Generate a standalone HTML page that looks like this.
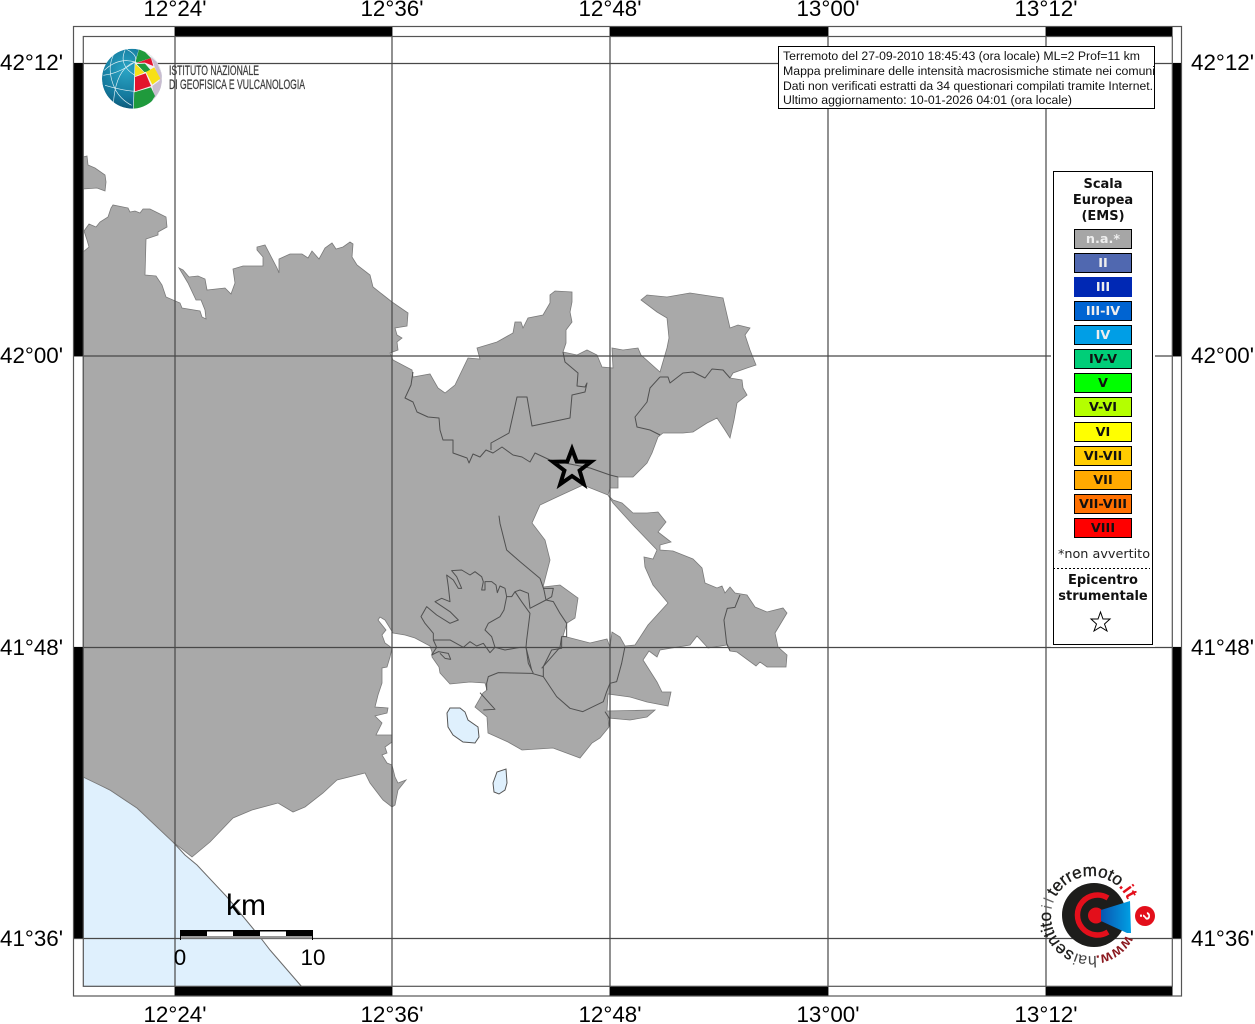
<!DOCTYPE html>
<html><head><meta charset="utf-8"><style>
html,body{margin:0;padding:0;background:#fff;width:1255px;height:1024px;overflow:hidden}
svg{display:block}
.ax{font:22.4px "Liberation Sans",sans-serif;fill:#000}
.lg{font:bold 13px "DejaVu Sans",sans-serif;text-anchor:middle;fill:#111}
.c{font:bold 12.8px "DejaVu Sans",sans-serif;text-anchor:middle;fill:#111}
.t{font:12.3px "Liberation Sans",sans-serif;fill:#111}
.il{fill:none;stroke:#505050;stroke-linejoin:round}
</style></head><body>
<svg width="1255" height="1024" viewBox="0 0 1255 1024" xmlns="http://www.w3.org/2000/svg">
<defs>
<clipPath id="gc"><circle cx="132" cy="78.700" r="30"/></clipPath>
<radialGradient id="gb" cx=".4" cy=".35" r=".75"><stop offset="0" stop-color="#2aa5c5"/><stop offset=".6" stop-color="#14789c"/><stop offset="1" stop-color="#0b4a68"/></radialGradient>
<linearGradient id="mg" x1="0" y1="0" x2="1" y2="0"><stop offset="0" stop-color="#0a55b0"/><stop offset="1" stop-color="#00a0e4"/></linearGradient>
<path id="a1" d="M1055.700 897.200 A40 40 0 0 1 1125.600 896"/>
<path id="a2" d="M1118.300 886.800 A40 40 0 0 1 1131 916"/>
<path id="a3" d="M1074.700 952.600 A40 40 0 0 1 1055 898.500"/>
<path id="a4" d="M1051.500 909.800 A40 40 0 0 1 1058.200 893"/>
<path id="a5" d="M1096.600 955.600 A40 40 0 0 1 1068 948.800"/>
<path id="a6" d="M1126.300 934.800 A40 40 0 0 1 1096.600 955.600"/>
</defs>
<rect width="1255" height="1024" fill="#fff"/>

<polygon fill="#dff0fd" points="83,776 110,790 137,808 173,842 185,855 197,865 227,897 260,937 270,950 302,987 83,987"/>
<polyline fill="none" stroke="#6a6a6a" stroke-width="1" points="83,776 110,790 137,808 173,842 185,855 197,865 227,897 260,937 270,950 302,987"/>

<path fill="#a9a9a9" stroke="#7a7a7a" stroke-width=".8" d="M83,157 87,156 88,165 95,168 105,175 106,182 105,191 97,188 83,189Z"/>
<path fill="#a9a9a9" stroke="#7a7a7a" stroke-width=".8" d="M225,497 232,491 238,494 239,500 230,502Z"/>
<path fill="#a9a9a9" fill-rule="evenodd" stroke="#7a7a7a" stroke-width=".8" d="M83,252 89,247 87,240 84,231 89,224 96,227 100,222 108,217 111,208 113,205 128,208 130,212 135,211 140,213 143,209 150,209 158,213 166,217 167,227 158,232 158,235 146,239 145,275 156,276 162,285 166,297 180,303 182,308 200,311 202,317 206,319 205,310 201,300 196,300 188,283 179,268 183,270 189,277 198,276 205,279 207,290 225,288 231,294 235,283 233,269 243,266 263,266 263,257 257,250 257,247 265,245 277,268 279,273 279,259 290,254 302,254 308,258 312,251 319,259 325,248 332,243 336,249 343,247 350,242 353,244 352,257 357,265 370,275 373,287 392,302 408,313 407,326 395,328 397,335 402,338 397,342 398,350 390,353 393,360 412,370 413,377 430,374 438,388 445,393 455,385 468,358 480,359 477,348 497,342 513,333 515,322 521,322 523,328 528,318 543,315 550,303 550,295 555,291 572,292 572,302 570,312 572,322 566,330 566,343 563,352 577,355 587,350 597,355 602,367 613,368 612,348 623,350 638,348 641,355 660,372 667,348 669,338 667,318 657,312 641,300 647,295 667,297 690,293 723,298 730,328 738,325 750,328 745,335 750,350 756,365 747,368 733,373 730,378 742,380 743,388 747,395 737,403 734,420 730,438 725,430 717,418 707,423 693,432 683,433 663,433 658,437 652,453 647,463 633,477 618,477 618,488 610,488 608,495 613,500 622,503 633,513 647,513 658,512 666,522 658,532 671,542 660,545 660,550 673,551 693,559 702,568 705,583 717,588 722,586 725,593 730,587 735,593 747,595 755,607 767,612 783,608 787,613 775,633 778,647 787,655 786,667 767,667 760,662 756,666 737,652 730,651 727,645 708,648 697,636 690,645 660,650 657,657 649,651 643,660 657,682 662,692 671,692 668,706 647,702 630,697 608,694 607,711 655,710 647,717 630,720 608,718 609,727 600,738 592,743 580,758 553,748 522,750 508,742 488,733 487,717 475,707 483,693 487,690 485,683 470,682 450,684 440,673 439,667 432,657 432,652 430,646 415,638 405,635 393,633 385,620 380,617 378,620 386,630 382,635 385,643 392,648 390,657 387,667 382,668 382,683 378,695 375,707 388,708 387,713 375,716 382,723 376,735 392,735 392,742 385,747 387,753 382,755 387,763 392,765 395,777 398,783 406,780 398,790 395,805 392,807 383,800 370,783 365,773 337,780 323,793 305,807 293,812 278,803 252,810 233,818 210,842 192,857 173,842 137,808 110,790 83,777Z M608,495 583,485 557,497 540,505 532,523 545,540 550,560 543,587 560,585 578,598 575,618 567,623 563,636 590,643 607,639 610,647 612,632 620,637 625,646 635,645 648,625 668,603 653,585 645,567 644,557 653,559 657,550 633,525 613,503Z"/>

<g class="il" stroke-width="1">
<polyline points="413,372 411,385 405,398 413,402 417,412 428,417 439,418 440,430 443,440 453,440 453,453 467,458 469,463 473,454 480,457 486,450 493,453 502,447 513,455 522,457 530,462 535,453 550,460 590,468 610,475 618,477"/>
<polyline points="491,450 491,443 509,433 517,397 527,397 532,426 570,418 572,395 585,392 587,383 585,387 577,386 578,373 565,362 563,352"/>
<polyline points="660,377 650,388 647,402 635,417 637,427 650,430 660,435"/>
<polyline points="660,377 668,377 670,383 683,373 693,372 705,378 712,369 723,370 730,378"/>
</g>
<g class="il" stroke-width="3" transform="translate(420 560) scale(.3333)">
<polyline points="378,120 330,145 325,100 300,90 285,95 275,110 260,110 255,85 240,78 232,98 228,75 215,65 195,65 195,90 185,90 190,65 185,50 165,35 150,45 125,30 95,32 110,50 125,85 115,85 100,60 80,45 85,80 90,125 65,115 45,125 90,155 115,180 90,190 50,165 20,140 3,170 15,190 40,220 40,240 90,240 130,262 150,245 170,258 190,250 210,278 225,262 255,270 300,262 318,262 325,290 335,330"/>
<polyline points="260,110 252,150 240,170 205,190 195,210 215,230 225,262"/>
<polyline points="285,95 305,125 330,160 320,240 318,262"/>
<polyline points="40,240 50,262 35,285 55,275 85,280 92,298 75,295 60,280"/>
<polyline points="370,85 400,85 395,110 378,120 400,125 420,160 440,190 440,230 425,230 420,262 365,325"/>
</g>
<g class="il" stroke-width="3" transform="translate(400 500) scale(.3333)">
<polyline points="297,47 300,70 320,150 360,185 420,235 432,270 438,300"/>
<polyline points="260,570 260,550 265,530 295,518 395,520 430,530 470,590 510,625 548,635 610,605 620,575 630,550 650,545 665,490 675,440"/>
<polyline points="378,440 385,490 400,520"/>
<polyline points="430,530 430,500 455,450 485,445 485,410"/>
<polyline points="240,578 285,628 250,630"/>
<polyline points="1020,285 1005,322 982,325 972,360 980,430 990,452"/>
<polyline points="615,635 628,655 628,680"/>
</g>

<path fill="#dff0fd" stroke="#555" stroke-width="1" d="M447,713 450,708 460,708 465,712 468,720 478,727 479,737 475,743 463,742 453,735 448,727Z"/>
<path fill="#dff0fd" stroke="#555" stroke-width="1" d="M493,783 497,772 506,769 507,783 505,790 499,794 494,792Z"/>

<path fill="none" stroke="#484848" stroke-width="1.200" d="M175 26V996M392 26V996M610 26V996M828 26V996M1046 26V996M73 63.500H1181M73 356H1181M73 647.500H1181M73 938.500H1181"/>

<g fill="#000">
<rect x="175" y="26" width="217" height="10.500"/><rect x="610" y="26" width="218" height="10.500"/><rect x="1046" y="26" width="126.500" height="10.500"/>
<rect x="175" y="986" width="217" height="10"/><rect x="610" y="986" width="218" height="10"/><rect x="1046" y="986" width="126.500" height="10"/>
<rect x="73" y="63" width="10.500" height="293"/><rect x="73" y="647" width="10.500" height="291"/>
<rect x="1172" y="63" width="9" height="293"/><rect x="1172" y="647" width="9" height="291"/>
</g>
<rect x="73.500" y="26.500" width="1108" height="969.500" fill="none" stroke="#555" stroke-width="1.200"/>
<rect x="83.300" y="36.500" width="1089" height="949.800" fill="none" stroke="#555" stroke-width="1.200"/>

<polygon fill="none" stroke="#000" stroke-width="4" stroke-miterlimit="10" points="572,449 576.700,461.500 591,461.800 579.600,470.500 583.800,484.200 572,476 560.200,484.200 564.400,470.500 553,461.800 567.300,461.500"/>

<g class="ax" text-anchor="middle">
<text x="175" y="16">12°24'</text><text x="392" y="16">12°36'</text><text x="610" y="16">12°48'</text><text x="828" y="16">13°00'</text><text x="1046" y="16">13°12'</text>
<text x="175" y="1022">12°24'</text><text x="392" y="1022">12°36'</text><text x="610" y="1022">12°48'</text><text x="828" y="1022">13°00'</text><text x="1046" y="1022">13°12'</text>
</g>
<g class="ax">
<text x="0" y="70">42°12'</text><text x="0" y="363">42°00'</text><text x="0" y="655">41°48'</text><text x="0" y="946">41°36'</text>
<text x="1191" y="70">42°12'</text><text x="1191" y="363">42°00'</text><text x="1191" y="655">41°48'</text><text x="1191" y="946">41°36'</text>
</g>

<!-- INGV logo -->
<g clip-path="url(#gc)">
<circle cx="132" cy="78.700" r="30" fill="url(#gb)"/>
<g transform="translate(95 42) scale(.3333)">
<polygon fill="#f2f0f3" points="120,60 135,10 215,60 215,210 115,210"/>
<polygon fill="#1f9a3c" points="122,58 132,22 150,30 168,48 125,62"/>
<polygon fill="#e3132c" points="125,63 168,48 175,72 150,62"/>
<polygon fill="#c9bdd0" points="168,45 185,60 200,95 200,130 192,110 178,72"/>
<polygon fill="#1f9a3c" points="125,66 150,65 170,88 148,90"/>
<polygon fill="#f7e017" points="120,65 148,92 120,103"/>
<polygon fill="#e3132c" points="120,105 152,94 168,132 120,148"/>
<polygon fill="#f7e017" points="153,90 178,76 196,110 172,128"/>
<polygon fill="#c9bdd0" points="172,132 198,113 198,140 178,170"/>
<polygon fill="#1f9a3c" points="117,151 168,136 180,162 160,195 115,205"/>
<g fill="none" stroke="#dff0f5" stroke-width="2">
<path d="M120,60 L115,200"/>
<path d="M120,60 Q60,80 55,190"/>
<path d="M120,60 Q70,45 28,85"/>
<path d="M95,22 Q130,40 120,60"/>
<path d="M60,30 Q30,80 62,145 Q80,175 110,190"/>
<path d="M90,25 Q70,70 120,100"/>
<path d="M25,100 Q70,95 120,60"/>
<path d="M30,130 Q80,145 118,148"/>
</g>
</g>
</g>
<text x="169" y="75" font-family="Liberation Sans,sans-serif" font-size="13.500" fill="#3c3c3c" stroke="#3c3c3c" stroke-width=".25" textLength="90" lengthAdjust="spacingAndGlyphs">ISTITUTO NAZIONALE</text>
<text x="169" y="89" font-family="Liberation Sans,sans-serif" font-size="13.500" fill="#3c3c3c" stroke="#3c3c3c" stroke-width=".25" textLength="136" lengthAdjust="spacingAndGlyphs">DI GEOFISICA E VULCANOLOGIA</text>

<!-- Info box -->
<rect x="778.500" y="46.500" width="376" height="62" fill="#fff" stroke="#000" stroke-width="1"/>
<text class="t" x="783" y="60" textLength="357" lengthAdjust="spacingAndGlyphs">Terremoto del 27-09-2010 18:45:43 (ora locale) ML=2 Prof=11 km</text>
<text class="t" x="783" y="75" textLength="372" lengthAdjust="spacingAndGlyphs">Mappa preliminare delle intensità macrosismiche stimate nei comuni</text>
<text class="t" x="783" y="90" textLength="370" lengthAdjust="spacingAndGlyphs">Dati non verificati estratti da 34 questionari compilati tramite Internet.</text>
<text class="t" x="783" y="104" textLength="289" lengthAdjust="spacingAndGlyphs">Ultimo aggiornamento: 10-01-2026 04:01 (ora locale)</text>

<!-- Legend -->
<rect x="1051" y="169" width="104" height="478" fill="#fff"/>
<rect x="1053.500" y="171.500" width="99" height="473" fill="#fff" stroke="#000" stroke-width="1"/>
<text class="lg" x="1103" y="188">Scala</text>
<text class="lg" x="1103" y="204">Europea</text>
<text class="lg" x="1103" y="220">(EMS)</text>
<g stroke="#000" stroke-width="1">
<rect x="1074.500" y="229.500" width="57" height="19" fill="#a6a6a6"/>
<rect x="1074.500" y="253.500" width="57" height="19" fill="#5068b0"/>
<rect x="1074.500" y="277.500" width="57" height="19" fill="#0028b4" stroke="#0028b4"/>
<rect x="1074.500" y="301.500" width="57" height="19" fill="#0064d2"/>
<rect x="1074.500" y="325.500" width="57" height="19" fill="#009ee6"/>
<rect x="1074.500" y="349.500" width="57" height="19" fill="#00ce78"/>
<rect x="1074.500" y="373.500" width="57" height="19" fill="#00ff00"/>
<rect x="1074.500" y="397.500" width="57" height="19" fill="#b4ff00"/>
<rect x="1074.500" y="422.500" width="57" height="19" fill="#ffff00"/>
<rect x="1074.500" y="446.500" width="57" height="19" fill="#ffcc00"/>
<rect x="1074.500" y="470.500" width="57" height="19" fill="#ffaa00"/>
<rect x="1074.500" y="494.500" width="57" height="19" fill="#ff7000"/>
<rect x="1074.500" y="518.500" width="57" height="19" fill="#ff0000"/>
</g>
<g class="c">
<text x="1103" y="243" style="fill:#eee">n.a.*</text>
<text x="1103" y="267" style="fill:#eee">II</text>
<text x="1103" y="291" style="fill:#eee">III</text>
<text x="1103" y="315" style="fill:#eee">III-IV</text>
<text x="1103" y="339" style="fill:#eee">IV</text>
<text x="1103" y="363">IV-V</text>
<text x="1103" y="387">V</text>
<text x="1103" y="411">V-VI</text>
<text x="1103" y="436">VI</text>
<text x="1103" y="460">VI-VII</text>
<text x="1103" y="484">VII</text>
<text x="1103" y="508">VII-VIII</text>
<text x="1103" y="532">VIII</text>
</g>
<text x="1104" y="558" text-anchor="middle" font-family="DejaVu Sans,sans-serif" font-size="12.800" fill="#222">*non avvertito</text>
<line x1="1053" y1="568.500" x2="1150" y2="568.500" stroke="#000" stroke-dasharray="2 2" stroke-width="1"/>
<text class="lg" x="1103" y="584">Epicentro</text>
<text class="lg" x="1103" y="600">strumentale</text>
<polygon fill="#fff" stroke="#000" stroke-width="1" points="1100.500,612 1103,619 1110,619 1104.500,624 1107,631 1100.500,627 1094,631 1096.500,624 1091,619 1098,619"/>

<!-- Scale bar -->
<rect x="180" y="930" width="133" height="8" fill="#fff"/>
<g fill="#000">
<rect x="180" y="930" width="27" height="6"/><rect x="233" y="930" width="27" height="6"/><rect x="286" y="930" width="27" height="6"/>
<rect x="207" y="930" width="26" height="1.500"/><rect x="260" y="930" width="26" height="1.500"/>
<rect x="180" y="930" width="1" height="10"/><rect x="312" y="930" width="1" height="10"/>
</g>
<rect x="181" y="936" width="131" height="2.500" fill="#999"/>
<text x="246" y="915" text-anchor="middle" font-family="Liberation Sans,sans-serif" font-size="30" fill="#000">km</text>
<text x="180" y="965" text-anchor="middle" class="ax">0</text>
<text x="313" y="965" text-anchor="middle" class="ax">10</text>

<!-- haisentito logo -->
<circle cx="1094" cy="915" r="32" fill="#1d1d1b"/>
<path d="M1108 898 A20 20 0 1 0 1108 932" fill="none" stroke="#e30f1b" stroke-width="5.500"/>
<circle cx="1096" cy="915.500" r="8" fill="#e30f1b"/>
<polygon fill="url(#mg)" points="1101,910 1130,901 1131,933 1127,933 1101,921"/>
<circle cx="1145" cy="916" r="10" fill="#e30f1b"/>
<text x="1145" y="921" text-anchor="middle" font-family="Liberation Sans,sans-serif" font-weight="bold" font-size="15" fill="#fff" transform="rotate(90 1145 916)">?</text>
<g font-family="Liberation Sans,sans-serif" fill="#1d1d1b">
<text font-size="17" stroke="#1d1d1b" stroke-width=".35"><textPath href="#a1">terremoto</textPath></text>
<text font-size="18" font-weight="bold" fill="#e30f1b"><textPath href="#a2">.it</textPath></text>
<text font-size="17" stroke="#1d1d1b" stroke-width=".3"><textPath href="#a3">sentito</textPath></text>
<text font-size="15" fill="#666" letter-spacing="3"><textPath href="#a4">il</textPath></text>
<text font-size="16" fill="#444"><textPath href="#a5">hai</textPath></text>
<text font-size="15" font-weight="bold" fill="#8c1a20"><textPath href="#a6">www.</textPath></text>
</g>
</svg>
</body></html>
